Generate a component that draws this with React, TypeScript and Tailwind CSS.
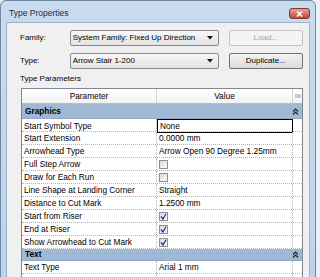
import React from 'react';

type Row =
  | { kind: 'group'; label: string }
  | { kind: 'row'; p: string; v?: string; check?: boolean; focus?: boolean };

const rows: Row[] = [
  { kind: 'group', label: 'Graphics' },
  { kind: 'row', p: 'Start Symbol Type', v: 'None', focus: true },
  { kind: 'row', p: 'Start Extension', v: '0.0000 mm' },
  { kind: 'row', p: 'Arrowhead Type', v: 'Arrow Open 90 Degree 1.25mm' },
  { kind: 'row', p: 'Full Step Arrow', check: false },
  { kind: 'row', p: 'Draw for Each Run', check: false },
  { kind: 'row', p: 'Line Shape at Landing Corner', v: 'Straight' },
  { kind: 'row', p: 'Distance to Cut Mark', v: '1.2500 mm' },
  { kind: 'row', p: 'Start from Riser', check: true },
  { kind: 'row', p: 'End at Riser', check: true },
  { kind: 'row', p: 'Show Arrowhead to Cut Mark', check: true },
  { kind: 'group', label: 'Text' },
  { kind: 'row', p: 'Text Type', v: 'Arial 1 mm' },
  { kind: 'row', p: '', v: '' },
];

function CheckBox({ checked }: { checked: boolean }) {
  return (
    <div className="w-[9px] h-[9px] border border-[#8e8f8f] bg-gradient-to-br from-[#dcdcdc] to-[#fbfbfb] flex items-center justify-center">
      {checked && (
        <svg width="7" height="7" viewBox="0 0 7 7">
          <path d="M1 3.5 L3 6 L6 0.8" fill="none" stroke="#1f3a93" strokeWidth="1.3" />
        </svg>
      )}
    </div>
  );
}

function Collapse() {
  return (
    <svg width="7" height="7" viewBox="0 0 7 7">
      <path d="M1 3.5 L3.5 1 L6 3.5 M1 6.5 L3.5 4 L6 6.5" fill="none" stroke="#222" strokeWidth="1.1" />
    </svg>
  );
}

function Combo({ text }: { text: string }) {
  return (
    <div className="w-[150px] h-[16px] border border-[#8a8a8a] rounded-[2px] bg-gradient-to-b from-[#f7f7f7] to-[#e3e3e3] flex items-center pl-[2px] pr-[5px]">
      <span className="flex-1 truncate">{text}</span>
      <svg width="6" height="4" viewBox="0 0 6 4">
        <path d="M0 0 H6 L3 3.5 Z" fill="#111" />
      </svg>
    </div>
  );
}

export default function App() {
  return (
    <div className="w-[320px] h-[277px] overflow-hidden bg-[#e9f0f7] font-['Liberation_Sans',Arial,sans-serif] text-black">
      <div className="w-[316px] h-[300px] rounded-t-[6px] border border-[#6f88a4] bg-gradient-to-b from-[#c9dcef] to-[#bcd3ea] flex flex-col px-[5px]">
        {/* Title bar */}
        <div className="h-[21px] flex items-center justify-between pt-[4px] pl-[3px]">
          <span className="text-[8.5px] text-[#1e2a3a]">Type Properties</span>
          <div className="w-[21px] h-[11px] rounded-[3px] border border-[#7a3a34] bg-gradient-to-b from-[#e8a196] to-[#c4423a] flex items-center justify-center">
            <svg width="7" height="6" viewBox="0 0 7 6">
              <path d="M1 0.5 L6 5.5 M6 0.5 L1 5.5" stroke="#fff" strokeWidth="1.6" />
            </svg>
          </div>
        </div>

        {/* Client area */}
        <div className="flex-1 bg-[#f0f0f0] border border-[#9eb3ca] pt-[7px] pl-[13px] pr-[6px] text-[8px]">
          <div className="flex items-center">
            <span className="w-[50px]">Family:</span>
            <Combo text="System Family: Fixed Up Direction" />
            <div className="ml-[10px] w-[75px] h-[16px] border border-[#c2c2c2] rounded-[2px] bg-[#f4f4f4] flex items-center justify-center text-[#a3a3a3]">
              Load...
            </div>
          </div>
          <div className="flex items-center mt-[7px]">
            <span className="w-[50px]">Type:</span>
            <Combo text="Arrow Stair 1-200" />
            <div className="ml-[10px] w-[75px] h-[16px] border border-[#707070] rounded-[2px] bg-gradient-to-b from-[#f3f3f3] to-[#dcdcdc] flex items-center justify-center">
              Duplicate...
            </div>
          </div>
          <div className="mt-[4px] h-[12px] flex items-center">Type Parameters</div>

          {/* Grid */}
          <div className="ml-[1px] mt-[3px] w-[282px] border border-[#828790] bg-white text-[8.3px]">
            <div className="grid grid-cols-[135px_136px_1fr] h-[15px] border-b border-[#bcbcbc] bg-gradient-to-b from-white to-[#f3f3f3]">
              <div className="flex items-center justify-center border-r border-[#d5d5d5]">Parameter</div>
              <div className="flex items-center justify-center border-r border-[#d5d5d5]">Value</div>
              <div className="flex items-center justify-center">
                <svg width="6" height="5" viewBox="0 0 6 5">
                  <path d="M0 1 H6 M0 3 H6" stroke="#8aa0bb" strokeWidth="1" />
                </svg>
              </div>
            </div>
            {rows.map((r, i) =>
              r.kind === 'group' ? (
                <div
                  key={i}
                  className={`${i === 0 ? 'h-[15px]' : 'h-[12px]'} bg-[#9fb8d4] flex items-center justify-between pl-[3px] pr-[3px] font-bold border-b border-[#8fa9c6]`}
                >
                  <span>{r.label}</span>
                  <Collapse />
                </div>
              ) : (
                <div key={i} className="grid grid-cols-[135px_136px_1fr] h-[13px] border-b border-dotted border-[#b5b5b5]">
                  <div className="flex items-center pl-[2px] border-r border-dotted border-[#b5b5b5] whitespace-nowrap">{r.p}</div>
                  <div
                    className={`flex items-center pl-[2px] border-r whitespace-nowrap ${
                      r.focus ? 'border border-black' : 'border-dotted border-[#b5b5b5]'
                    }`}
                  >
                    {r.check !== undefined ? <CheckBox checked={r.check} /> : r.v}
                  </div>
                  <div />
                </div>
              )
            )}
          </div>
        </div>
      </div>
    </div>
  );
}
